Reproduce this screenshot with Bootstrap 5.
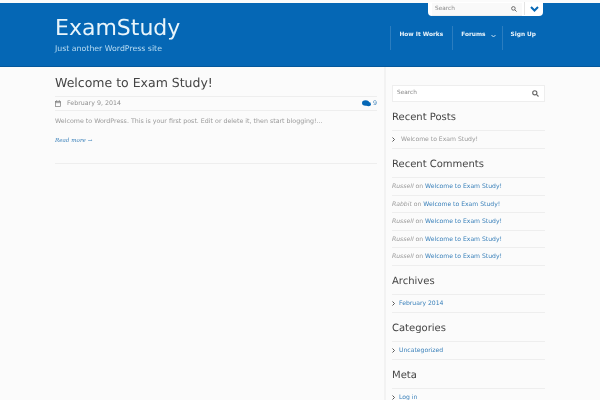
<!DOCTYPE html>
<html lang="en">
<head>
<meta charset="utf-8">
<title>ExamStudy</title>
<link href="https://cdn.jsdelivr.net/npm/bootstrap@5.3.0/dist/css/bootstrap.min.css" rel="stylesheet">
<style>
html,body{height:400px;overflow:hidden}
html{background:#fbfbfb}
body{background:#fbfbfb;font-family:"DejaVu Sans",sans-serif;font-size:6.3px;color:#8f8f8f;padding-top:3px;filter:blur(.3px);text-rendering:geometricPrecision}
a{text-decoration:none;color:#3a80ba}
.mast{background:#0567b5;height:64px;border-bottom:1px solid #04589c;width:600px}
.wrap{width:490px;margin-left:55px}
.brand-name{font-size:22px;line-height:28px;color:#e9f5fb;padding-top:12px;box-sizing:content-box}
.brand-sub{font-size:7.8px;line-height:11px;color:#b9dcf2}
.topbox{background:#fff;width:115px;height:14px;border-radius:0 0 4px 4px;margin-top:-1px;margin-right:2px}
.topsearch{width:90px;margin:1px 0 0 4px;background:#f9f9f9;border-bottom:1px solid #eee;height:13px;padding:0 5px 0 3px;font-size:5.8px;line-height:13px;color:#888}
.topchev{width:19px;margin-left:2px;border-left:1px solid #e4e4e4;height:13px}
.mainnav{margin-top:10px}
.mainnav a{color:#eaf4fb;font-weight:700;font-size:5.83px;height:24px;line-height:14px;padding:2px 9px 0 8px;border-left:1px solid #2b7dbf;display:flex;align-items:flex-start;white-space:nowrap}
.mainnav a svg{margin:6px -3px 0 5px}
.primary{width:322px}
.sidebar{width:161px;margin-left:7px;border-left:2px solid #f2f2f2;padding-left:6px;height:340px}
h1.posttitle{font-size:12.5px;line-height:16px;font-weight:400;color:#444;margin:8px 0 5px}
.metarow{border-top:1px solid #eee;border-bottom:1px solid #eee;height:15px;line-height:13px;color:#8f8f8f}
.metarow .dt{margin-left:6px}
.cmt{color:#3a80ba}
.cmt svg{margin-right:2px}
.excerpt{margin:6px 0 0;line-height:10px;color:#999}
.more{display:block;font-family:"DejaVu Serif",serif;font-style:italic;font-size:5.6px;margin-top:9px;line-height:10px;color:#3a80ba}
.postend{border-top:1px solid #eee;margin-top:17px}
.sidesearch{background:#fff;border:1px solid #eee;height:16.5px;margin-top:18px;padding:1px 5px 0 4px;font-size:5.8px;line-height:15px;color:#888}
h2.wtitle{font-size:10px;line-height:12px;font-weight:400;color:#444;margin:10.5px 0 6px}
.wlist{list-style:none;margin:0;padding:0;border-top:1px solid #eee;font-size:6.1px}
.wlist li{border-bottom:1px solid #eee;height:17.5px;line-height:18px;color:#999;white-space:nowrap}
.wlist svg{margin-right:4px;vertical-align:-0.5px}
.wlist li.plain svg{margin-right:6px}
</style>
</head>
<body>
<header class="mast">
  <div class="wrap d-flex justify-content-between">
    <div>
      <div class="brand-name">ExamStudy</div>
      <div class="brand-sub">Just another WordPress site</div>
    </div>
    <div class="d-flex flex-column align-items-end">
      <div class="topbox d-flex">
        <div class="topsearch d-flex justify-content-between align-items-center">
          <span>Search</span>
          <svg width="6" height="6" viewBox="0 0 10 10" fill="none" stroke="#666" stroke-width="1.6"><circle cx="4" cy="4" r="3"/><path d="M6.3 6.3 9.3 9.3"/></svg>
        </div>
        <div class="topchev d-flex align-items-center justify-content-center">
          <svg width="9" height="6" viewBox="0 0 9 6" fill="none" stroke="#0567b5" stroke-width="2"><path d="M1 1 4.5 4.5 8 1"/></svg>
        </div>
      </div>
      <nav class="mainnav d-flex">
        <a href="#">How It Works</a>
        <a href="#">Forums<svg width="5" height="4" viewBox="0 0 5 4" fill="none" stroke="#dcecf7" stroke-width="0.9"><path d="M.5 1 2.500 3 4.500 1"/></svg></a>
        <a href="#">Sign Up</a>
      </nav>
    </div>
  </div>
</header>
<div class="wrap d-flex">
  <main class="primary">
    <h1 class="posttitle">Welcome to Exam Study!</h1>
    <div class="metarow d-flex justify-content-between align-items-center">
      <span class="d-flex align-items-center">
        <svg width="6" height="7" viewBox="0 0 7 8" fill="none" stroke="#777" stroke-width="0.8"><rect x=".5" y="1.500" width="6" height="6"/><path d="M.5 3h6M2 0v2M5 0v2"/></svg>
        <span class="dt">February 9, 2014</span>
      </span>
      <span class="cmt d-flex align-items-center">
        <svg width="9" height="7" viewBox="0 0 10 7" fill="#0567b5"><ellipse cx="4" cy="3" rx="4" ry="3"/><ellipse cx="7.200" cy="4.200" rx="2.800" ry="2.300"/></svg>
        <span>9</span>
      </span>
    </div>
    <p class="excerpt">Welcome to WordPress. This is your first post. Edit or delete it, then start blogging!...</p>
    <a class="more" href="#">Read more →</a>
    <div class="postend"></div>
  </main>
  <aside class="sidebar">
    <div class="sidesearch d-flex justify-content-between align-items-center">
      <span>Search</span>
      <svg width="7" height="7" viewBox="0 0 10 10" fill="none" stroke="#666" stroke-width="1.6"><circle cx="4" cy="4" r="3"/><path d="M6.300 6.300 9.300 9.300"/></svg>
    </div>
    <h2 class="wtitle">Recent Posts</h2>
    <ul class="wlist">
      <li class="plain"><svg width="3" height="5" viewBox="0 0 3 5" fill="none" stroke="#555" stroke-width="1"><path d="M.5.500 2.500 2.500.5 4.500"/></svg>Welcome to Exam Study!</li>
    </ul>
    <h2 class="wtitle">Recent Comments</h2>
    <ul class="wlist">
      <li><i>Russell</i> on <a href="#">Welcome to Exam Study!</a></li>
      <li><i>Rabbit</i> on <a href="#">Welcome to Exam Study!</a></li>
      <li><i>Russell</i> on <a href="#">Welcome to Exam Study!</a></li>
      <li><i>Russell</i> on <a href="#">Welcome to Exam Study!</a></li>
      <li><i>Russell</i> on <a href="#">Welcome to Exam Study!</a></li>
    </ul>
    <h2 class="wtitle">Archives</h2>
    <ul class="wlist">
      <li><svg width="3" height="5" viewBox="0 0 3 5" fill="none" stroke="#555" stroke-width="1"><path d="M.5.500 2.500 2.500.5 4.500"/></svg><a href="#">February 2014</a></li>
    </ul>
    <h2 class="wtitle">Categories</h2>
    <ul class="wlist">
      <li><svg width="3" height="5" viewBox="0 0 3 5" fill="none" stroke="#555" stroke-width="1"><path d="M.5.500 2.500 2.500.5 4.500"/></svg><a href="#">Uncategorized</a></li>
    </ul>
    <h2 class="wtitle">Meta</h2>
    <ul class="wlist">
      <li><svg width="3" height="5" viewBox="0 0 3 5" fill="none" stroke="#555" stroke-width="1"><path d="M.5.500 2.500 2.500.5 4.500"/></svg><a href="#">Log in</a></li>
    </ul>
  </aside>
</div>
<script src="https://cdn.jsdelivr.net/npm/bootstrap@5.3.0/dist/js/bootstrap.bundle.min.js"></script>
</body>
</html>
